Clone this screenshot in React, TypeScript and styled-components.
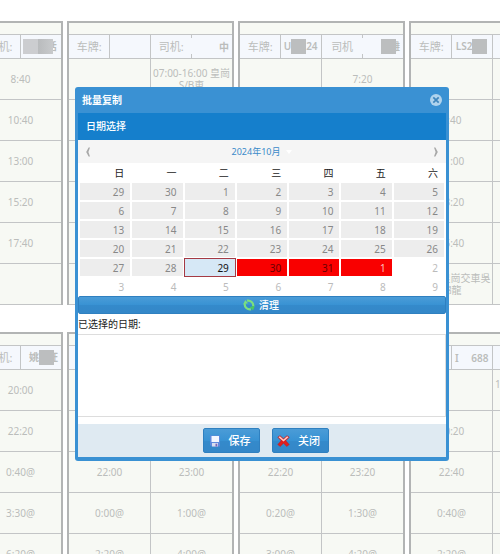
import React from "react";
import styled, { createGlobalStyle, css } from "styled-components";

const GlobalStyle = createGlobalStyle`
  * { box-sizing: border-box; }
  body {
    margin: 0;
    background: #fff;
    font-family: "Noto Sans", "Noto Sans CJK SC", sans-serif;
    font-size: 10px;
    line-height: 12px;
    overflow: hidden;
  }
  button { font: inherit; cursor: pointer; }
`;

/* ---------- schedule behind the dialog ---------- */

const Page = styled.div`
  height: 100vh;
  overflow: hidden;
  padding-top: 21px;
  color: #bbbdbb;
`;

const Strip = styled.section`
  display: flex;
  gap: 4px;
  margin-left: -104px;
  margin-bottom: 27px;
`;

const Card = styled.div`
  flex: 0 0 167px;
  padding-top: 11px;
  background: #f7f9f4;
  border: 2px solid #b2b4b4;
  border-bottom: 0;
`;

const Board = styled.table`
  width: 100%;
  table-layout: fixed;
  border-collapse: collapse;

  th, td {
    padding: 0;
    text-align: center;
    overflow: hidden;
    border: 1px solid #c3c5c6;
  }
  tr > :first-child { border-left: 0; }
  tr > :last-child { border-right: 0; }
  th {
    height: 24px;
    font-size: 11px;
    font-weight: 400;
    white-space: nowrap;
    background: #f5f8fd;
  }
  td { height: 41px; }
`;

const DriverLabel = styled.th<{ $broken?: boolean }>`
  && { ${(p) => p.$broken && css`border-right: 0;`} }
`;

const Value = styled.th<{ $broken?: boolean; $align?: "left" | "right" }>`
  && {
    font-size: 10px;
    font-weight: 600;
    text-align: ${(p) => p.$align ?? "center"};
    padding: 0 3px 0 2px;
    ${(p) =>
      p.$broken &&
      css`
        border-left: 0;
        background: linear-gradient(#c3c5c6 3px, transparent 3px, transparent 19px, #c3c5c6 19px) 0 0 / 1px 100%
          no-repeat #f5f8fd;
      `}
  }
`;

const Mask = styled.span<{ $wide?: boolean; $over?: boolean }>`
  display: inline-block;
  position: relative;
  vertical-align: -4px;
  width: ${(p) => (p.$wide ? 30 : 15)}px;
  height: 15px;
  margin-right: ${(p) => (p.$over ? -6 : 0)}px;
  background: ${(p) => (p.$wide ? "linear-gradient(90deg, #cccdd0 50%, #b9bbbd 50%, #c8cacc)" : "#bcbebf")};
`;

const Blank = styled.span`
  display: inline-block;
  width: 10px;
`;

type Vehicle = {
  plateLabel?: string;
  plate?: React.ReactNode;
  driverLabel: string;
  driver?: React.ReactNode;
  driverAlign?: "left" | "right";
  broken?: boolean;
  trips: React.ReactNode[][];
};

const upper: Vehicle[] = [
  {
    plateLabel: "车牌:",
    driverLabel: "司机:",
    driver: <><Mask $wide $over />恬</>,
    driverAlign: "left",
    trips: [["", "8:40"], ["", "10:40"], ["", "13:00"], ["", "15:20"], ["", "17:40"], ["", ""]],
  },
  {
    plateLabel: "车牌:",
    driverLabel: "司机:",
    driver: "中",
    driverAlign: "right",
    broken: true,
    trips: [["", <>07:00-16:00 皇崗<br />S/B車</>], ["", ""], ["", ""], ["", ""], ["", ""], ["", ""]],
  },
  {
    plateLabel: "车牌:",
    plate: <>U<Mask />24</>,
    driverLabel: "司机",
    driver: <><Mask $over />雄</>,
    driverAlign: "right",
    broken: true,
    trips: [["", "7:20"], ["", ""], ["", ""], ["", ""], ["", ""], ["", ""]],
  },
  {
    plateLabel: "车牌:",
    plate: <>LS2<Mask /></>,
    driverLabel: "",
    trips: [["", ""], ["8:40", ""], ["11:00", ""], ["13:20", ""], ["15:40", ""], [<>22:00 皇崗交車吳<br />錦龍</>, ""]],
  },
];

const lower: Vehicle[] = [
  {
    plateLabel: "车牌:",
    driverLabel: "司机:",
    driver: <>姚<Mask $over />旺</>,
    driverAlign: "right",
    trips: [["", "20:00"], ["", "22:20"], ["", "0:40@"], ["", "3:30@"], ["", "6:20@"]],
  },
  {
    driverLabel: "",
    trips: [["", ""], ["", ""], ["22:00", "23:00"], ["0:00@", "1:00@"], ["2:20@", "4:00@"]],
  },
  {
    driverLabel: "",
    trips: [["", ""], ["", ""], ["22:20", "23:20"], ["0:20@", "1:30@"], ["3:00@", "4:20@"]],
  },
  {
    plate: <>I <Blank />688</>,
    driverLabel: "",
    trips: [["", <>18:00-02:00 皇崗<br />S/B車</>], ["20:20", ""], ["22:40", ""], ["0:40@", ""], ["2:20@", ""]],
  },
];

const Schedule = ({ vehicles }: { vehicles: Vehicle[] }) => (
  <Strip>
    {vehicles.map((v, i) => (
      <Card key={i}>
        <Board>
          <thead>
            <tr>
              <th>{v.plateLabel}</th>
              <Value>{v.plate}</Value>
              <DriverLabel $broken={v.broken}>{v.driverLabel}</DriverLabel>
              <Value $broken={v.broken} $align={v.driverAlign}>{v.driver}</Value>
            </tr>
          </thead>
          <tbody>
            {v.trips.map((row, r) => (
              <tr key={r}>
                {row.map((trip, c) => (
                  <td key={c} colSpan={2}>{trip}</td>
                ))}
              </tr>
            ))}
          </tbody>
        </Board>
      </Card>
    ))}
  </Strip>
);

/* ---------- dialog ---------- */

const Dialog = styled.div`
  position: absolute;
  top: 87px;
  left: 75px;
  right: 51px;
  padding: 0 3px 4px;
  border-radius: 3px;
  background: #3a91d3;
  color: #222;
`;

const TitleBar = styled.header`
  display: flex;
  align-items: center;
  justify-content: space-between;
  height: 26px;
  padding: 0 4px;
  color: #fff;
`;

const Title = styled.h1`
  margin: 0;
  font-size: 10px;
  font-weight: 600;
`;

const IconButton = styled.button`
  display: flex;
  padding: 0;
  border: 0;
  background: none;
`;

const Body = styled.div`
  background: #fff;
`;

const SectionTitle = styled.h2`
  margin: 0;
  padding: 0 8px;
  font-size: 10px;
  font-weight: 500;
  line-height: 27px;
  color: #fff;
  background: #157fcc;
`;

const MonthBar = styled.div`
  display: flex;
  align-items: center;
  justify-content: space-between;
  height: 23px;
  padding: 0 7px;
  background: #f5f5f5;
`;

const MonthButton = styled.button`
  display: flex;
  align-items: center;
  gap: 6px;
  padding: 0;
  border: 0;
  background: none;
  color: #3a8ac9;
  font-size: 9px;
`;

const Calendar = styled.table`
  width: 100%;
  table-layout: fixed;
  border-collapse: separate;
  border-spacing: 2px;
  margin-bottom: -1px;

  th, td { padding: 0; }
  th {
    height: 16px;
    padding-right: 6px;
    text-align: right;
    font-weight: 400;
  }
`;

type DayKind = "past" | "today" | "picked" | "pickedNext" | "next";

const dayStyles = {
  past: css`background: #ededed; color: #888;`,
  today: css`background: #d6e8f6; color: #111; outline: 1px solid #a53a44;`,
  picked: css`background: #f90000; color: #6a0000;`,
  pickedNext: css`background: #f90000; color: #ffc0c0;`,
  next: css`background: #fff; color: #bbb;`,
};

const Day = styled.button<{ $kind: DayKind }>`
  display: block;
  width: 100%;
  height: 17px;
  padding: 0 6px 0 0;
  border: 0;
  text-align: right;
  ${(p) => dayStyles[p.$kind]}
`;

const buttonFace = css`
  display: flex;
  align-items: center;
  justify-content: center;
  border: 1px solid #2f80c0;
  border-radius: 2px;
  background: linear-gradient(#4b9cd7, #3892d3 50%, #348acb 52%, #3487c8);
  color: #fff;
  font-weight: 500;
`;

const ClearButton = styled.button`
  ${buttonFace}
  width: 100%;
  height: 18px;
  gap: 4px;
  padding: 0 2px 0 0;
`;

const PickedLabel = styled.label`
  display: block;
  line-height: 20px;
  color: #222;
`;

const PickedDates = styled.textarea`
  display: block;
  width: 100%;
  height: 83px;
  border: 1px solid #ddd;
  border-left: 0;
  resize: none;
  outline: 0;
  font: inherit;
`;

const Footer = styled.footer`
  display: flex;
  justify-content: center;
  gap: 12px;
  margin-top: 7px;
  padding: 4px 0 4px 8px;
  background: #dfeaf2;
`;

const ActionButton = styled.button`
  ${buttonFace}
  width: 57px;
  height: 25px;
  gap: 8px;
  padding: 0 4px 0 0;
  font-size: 11px;
`;

const CloseIcon = () => (
  <svg width="12" height="12" viewBox="0 0 12 12" aria-hidden="true">
    <circle cx="6" cy="6" r="6" fill="#b0d3ed" />
    <path d="M3.3 3.3l5.4 5.4M8.7 3.3l-5.4 5.4" stroke="#3f86bd" strokeWidth="1.7" />
  </svg>
);

const Chevron = ({ next }: { next?: boolean }) => (
  <svg width="6" height="10" viewBox="0 0 6 10" aria-hidden="true">
    <path
      d={next ? "M1 .5h1.400L4.800 5 2.400 9.500H1L2.600 5z" : "M5 .5H3.600L1.200 5l2.400 4.500H5L3.400 5z"}
      fill="#a8a8a8"
    />
  </svg>
);

const ArrowDown = () => (
  <svg width="6" height="4" viewBox="0 0 6 4" aria-hidden="true">
    <path d="M0 0h6L3 4z" fill="#fff" />
  </svg>
);

const RefreshIcon = () => (
  <svg width="12" height="12" viewBox="0 0 12 12" aria-hidden="true">
    <g fill="none" strokeWidth="2.200">
      <path d="M8 10.300C4.400 11 1.200 8 1.800 4.600" stroke="#7be07e" />
      <path d="M4 1.700C7.600 1 10.800 4 10.200 7.400" stroke="#7be07e" />
    </g>
    <path d="M.2 5.200L2.200 1 5 4.200z" fill="#7be07e" />
    <path d="M11.800 6.800l-1.800 4.700L6.800 8z" fill="#4dca5c" />
  </svg>
);

const SaveIcon = () => (
  <svg width="12" height="12" viewBox="0 0 12 12" aria-hidden="true">
    <path d="M1 .5h10v11H2.500L1 10z" fill="#5f8ade" />
    <path d="M2.500 1h7.500v6H2.500z" fill="#f4f7ff" />
    <path d="M3 8h6v3.500H3z" fill="#d9def0" />
    <path d="M6.500 8.700h1.800v2.800H6.500z" fill="#7b65b8" />
  </svg>
);

const CancelIcon = () => (
  <svg width="13" height="12" viewBox="0 0 13 12" aria-hidden="true">
    <path
      d="M.8 2.200L3 .7l3.500 3L10 .7l2.200 1.500-3.400 3.600 3.400 3.700-2.400 1.900-3.300-3.200-3.300 3.200-2.400-1.900 3.400-3.700z"
      fill="#e01f1f"
      stroke="#c0181c"
      strokeWidth=".5"
    />
    <path d="M1.500 2.200l1.400-.9 3.600 3.200 3.600-3.200 1.400.9-5 4.200z" fill="#ffc9c2" />
  </svg>
);

const weekdays = ["日", "一", "二", "三", "四", "五", "六"];

const weeks = [
  [29, 30, 1, 2, 3, 4, 5],
  [6, 7, 8, 9, 10, 11, 12],
  [13, 14, 15, 16, 17, 18, 19],
  [20, 21, 22, 23, 24, 25, 26],
  [27, 28, 29, 30, 31, 1, 2],
  [3, 4, 5, 6, 7, 8, 9],
];

const kindOf = (index: number): DayKind => {
  if (index < 30) return "past";
  if (index === 30) return "today";
  if (index < 33) return "picked";
  return index === 33 ? "pickedNext" : "next";
};

const CopyDialog = () => (
  <Dialog role="dialog" aria-labelledby="copy-title">
    <TitleBar>
      <Title id="copy-title">批量复制</Title>
      <IconButton type="button" aria-label="关闭"><CloseIcon /></IconButton>
    </TitleBar>
    <Body>
      <SectionTitle>日期选择</SectionTitle>
      <MonthBar>
        <IconButton type="button" aria-label="上个月"><Chevron /></IconButton>
        <MonthButton type="button">2024年10月 <ArrowDown /></MonthButton>
        <IconButton type="button" aria-label="下个月"><Chevron next /></IconButton>
      </MonthBar>
      <Calendar>
        <thead>
          <tr>{weekdays.map((d) => <th key={d} scope="col">{d}</th>)}</tr>
        </thead>
        <tbody>
          {weeks.map((week, w) => (
            <tr key={w}>
              {week.map((day, d) => (
                <td key={d}><Day type="button" $kind={kindOf(w * 7 + d)}>{day}</Day></td>
              ))}
            </tr>
          ))}
        </tbody>
      </Calendar>
      <ClearButton type="button"><RefreshIcon />清理</ClearButton>
      <PickedLabel htmlFor="picked-dates">已选择的日期:</PickedLabel>
      <PickedDates id="picked-dates" />
      <Footer>
        <ActionButton type="button"><SaveIcon />保存</ActionButton>
        <ActionButton type="button"><CancelIcon />关闭</ActionButton>
      </Footer>
    </Body>
  </Dialog>
);

export default function App() {
  return (
    <>
      <GlobalStyle />
      <Page>
        <Schedule vehicles={upper} />
        <Schedule vehicles={lower} />
      </Page>
      <CopyDialog />
    </>
  );
}
